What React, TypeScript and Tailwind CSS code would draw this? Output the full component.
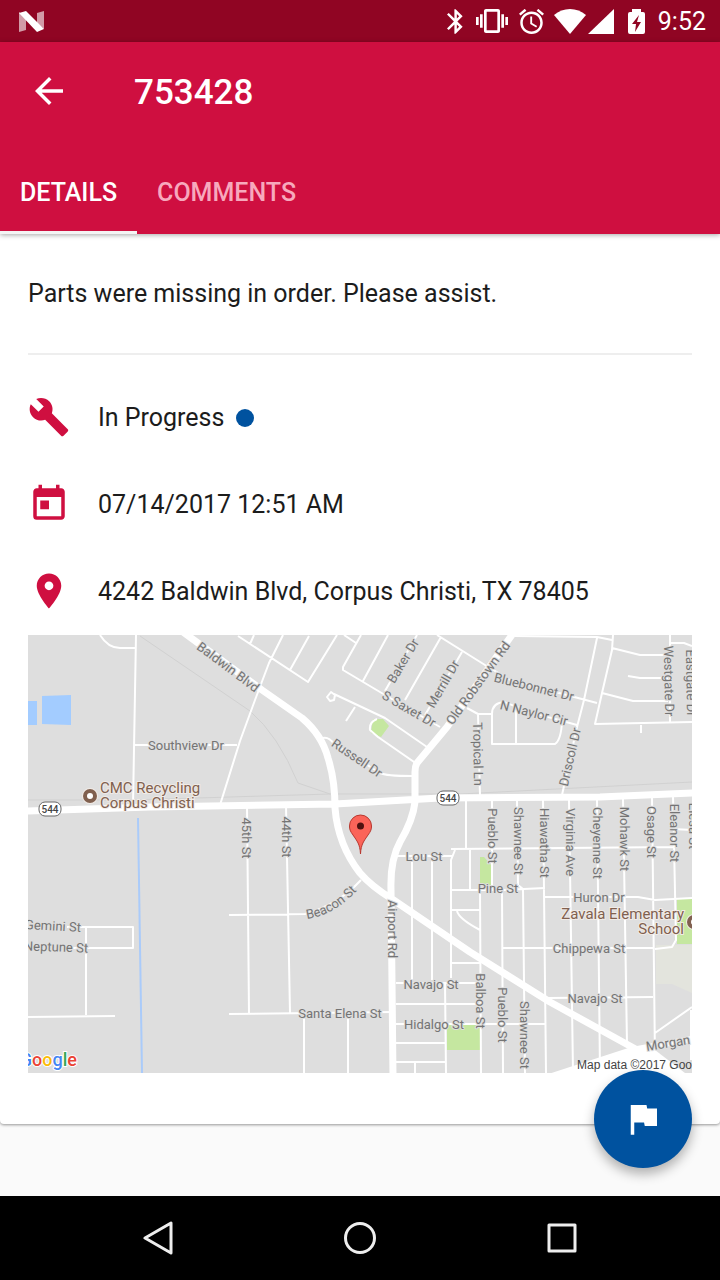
import type { ReactNode } from "react";
import {
  MdAccessAlarm,
  MdArrowBack,
  MdBluetooth,
  MdBuild,
  MdFlag,
  MdPlace,
  MdToday,
  MdVibration,
} from "react-icons/md";

function StatusBar() {
  return (
    <div className="flex h-[42px] items-center justify-between bg-[#900523] pr-[14px] pl-[19px] text-white">
      <svg className="h-[21px] w-[25px]" viewBox="0 0 25 21" aria-hidden="true">
        <path d="M0 1l7 5v13l-7 2z M25 0v18l-7-6V2z" fill="#fff" fillOpacity=".6" />
        <path d="M0 2l7-2 18 18-7 3z" fill="#fff" />
      </svg>
      <div className="flex items-center">
        <MdBluetooth viewBox="5 2 13 20" className="h-[25px] w-4" />
        <MdVibration viewBox="0 3 24 18" className="ml-[13px] h-[24px] w-8" />
        <MdAccessAlarm viewBox="2 2 20 20" className="ml-[11px] h-[25px] w-[25px]" />
        <svg className="ml-[10px] h-[25px] w-[32px]" viewBox="0 0 32 25" aria-hidden="true">
          <path d="M0 6C9-2 23-2 32 6L16 25z" fill="currentColor" />
        </svg>
        <svg className="ml-[2px] h-[25px] w-[26px]" viewBox="0 0 26 25" aria-hidden="true">
          <path d="M26 0v25H0z" fill="currentColor" />
        </svg>
        <svg className="ml-[14px] h-[25px] w-[17px]" viewBox="0 0 17 25" aria-hidden="true">
          <path
            d="M4 0h9v3h2q2 0 2 2v18q0 2-2 2H2q-2 0-2-2V5q0-2 2-2h2zM11 6L4 15h4l-1 8 6-10H9z"
            fill="currentColor"
            fillRule="evenodd"
          />
        </svg>
        <span className="ml-[13px] text-[25px] leading-none">9:52</span>
      </div>
    </div>
  );
}

function Header() {
  return (
    <header className="relative z-10 bg-[#cf0f40] text-white shadow-[0_1px_5px_rgba(0,0,0,0.35)]">
      <div className="flex h-[98px] items-center pl-7">
        <button type="button" aria-label="Back">
          <MdArrowBack className="size-[42px]" />
        </button>
        <h1 className="ml-16 pt-0.5 text-[35px] leading-none font-medium">753428</h1>
      </div>
      <div role="tablist" className="mt-[10px] flex h-[84px] text-[25px] font-medium">
        <button
          type="button"
          role="tab"
          aria-selected="true"
          className="border-b-[3px] border-[#f4f4f4] px-5 pt-1"
        >
          DETAILS
        </button>
        <button
          type="button"
          role="tab"
          aria-selected="false"
          className="border-b-[3px] border-transparent px-5 pt-1 text-[#f7a9bd]"
        >
          COMMENTS
        </button>
      </div>
    </header>
  );
}

const minorRoads = [
  "M100 635Q108 648 120 648H135",
  "M136 635L133 806",
  "M134 745H237",
  "M283 635L269 663L255 700L240 741L220 805",
  "M238 636L308 682L337 635",
  "M250 644L254 635",
  "M309 636L290 670",
  "M361 635L343 667V670L385 695L440 727",
  "M344 635L356 643",
  "M388 635L363 681",
  "M417 635L385 691",
  "M441 637L405 700",
  "M462 652L425 715",
  "M437 635L485 665L510 680L597 703",
  "M331 692l4 3l-1 5l-4 1l-3-4zM334 694L385 718L427 747",
  "M355 707L346 721",
  "M377 719Q369 722 370 730L378 737L417 764",
  "M320 739Q328 735 334 744L380 773Q386 776 412 776",
  "M515 636L597 637L612 640",
  "M597 638L584 700L577 727L562 795",
  "M613 635L612 650L602 693L595 724L692 722",
  "M612 648L640 655H668",
  "M628 676L640 678H668",
  "M602 693L633 701H668",
  "M670 635V723M670 643L684 643L692 646",
  "M641 725V733",
  "M467 708L478 714H491",
  "M577 725L530 712L504 702Q492 703 492 714V744H555Q561 740 562 722",
  "M516 710V744",
  "M478 714L480 796",
  "M466 800V849M451 849L675 847M673 829L692 830",
  "M455 850L451 860V978",
  "M412 858V980M432 858V980",
  "M470 850V890",
  "M492 800V889M517 800L518 885L523 889L525 1073",
  "M480 889L481 1073M502 890L503 1073",
  "M543 800L546 1073M569 800L573 1073M597 799L600 1073",
  "M623 799L627 1045M652 797L655 1060M673 796L676 940L672 947L655 949",
  "M396 856H452M451 890H504L545 888",
  "M451 910H480M457 911Q459 919 480 930M451 963H480",
  "M396 983H481M396 1004H481M396 1024H546M396 1043H445M396 1062H445M415 1062V1073",
  "M445 983L446 1073",
  "M545 897H638L655 900L692 898",
  "M503 948H653M548 998L653 997",
  "M655 1033L692 1007M691 1010V1060",
  "M67 927H133V948H67M86 927V1015M28 1017L115 1016",
  "M247 805L249 1014M286 805L290 1013",
  "M229 915L305 914Q338 905 361 880",
  "M229 1014L393 1012M304 1015V1073M348 1015V1073",
];

const majorRoads = [
  "M183 632L262 690L302 718Q322 735 328 758Q335 780 335 808Q338 845 360 873Q371 886 392 899L470 952L550 1002L650 1057",
  "M514 632L447 727L417 763Q415 766 415 772V802Q413 820 400 842Q390 860 391 890L393 1076",
  "M26 811L150 807L335 804L440 798L600 797L694 793",
];

type Label = [text: string, x: number, y: number, angle?: number];

const streetLabels: Label[] = [
  ["Baldwin Blvd", 228, 667, 37],
  ["Baker Dr", 403, 661, -59],
  ["Merrill Dr", 443, 684, -60],
  ["S Saxet Dr", 409, 709, 30],
  ["Old Robstown Rd", 478, 683, -54],
  ["Bluebonnet Dr", 534, 687, 14],
  ["N Naylor Cir", 534, 713, 14],
  ["Tropical Ln", 478, 754, 89],
  ["Driscoll Dr", 570, 757, -77],
  ["Westgate Dr", 669, 681, 89],
  ["Eastgate Dr", 691, 683, 89],
  ["Russell Dr", 357, 758, 34],
  ["Southview Dr", 186, 745],
  ["45th St", 246, 838, 90],
  ["44th St", 286, 837, 90],
  ["Pueblo St", 492, 836, 90],
  ["Shawnee St", 518, 841, 90],
  ["Hiawatha St", 544, 843, 90],
  ["Virginia Ave", 570, 842, 90],
  ["Cheyenne St", 597, 843, 90],
  ["Mohawk St", 624, 839, 90],
  ["Osage St", 651, 832, 90],
  ["Eleanor St", 674, 833, 90],
  ["Elesa St", 693, 826, 90],
  ["Lou St", 424, 856],
  ["Pine St", 498, 888],
  ["Huron Dr", 599, 897],
  ["Chippewa St", 589, 948],
  ["Navajo St", 431, 984],
  ["Navajo St", 595, 998],
  ["Hidalgo St", 434, 1024],
  ["Santa Elena St", 340, 1013],
  ["Airport Rd", 392, 929, 90],
  ["Balboa St", 480, 1001, 90],
  ["Pueblo St", 502, 1015, 90],
  ["Shawnee St", 524, 1035, 90],
  ["Gemini St", 53, 926, 3],
  ["Neptune St", 56, 947, 2],
  ["Morgan", 668, 1043, -9],
];

function Shield({ x, y }: { x: number; y: number }) {
  return (
    <g>
      <rect x={x - 11} y={y - 7} width="22" height="14" rx="6" fill="#fff" stroke="#666" />
      <text x={x} y={y + 4} textAnchor="middle" fontSize="10" fontWeight="500" fill="#444">
        544
      </text>
    </g>
  );
}

function Map() {
  return (
    <svg
      className="block h-[438px] w-full bg-[#dedede]"
      viewBox="28 635 664 438"
      preserveAspectRatio="xMidYMid slice"
      role="img"
      aria-label="Map of 4242 Baldwin Blvd"
    >
      <path d="M42 696l29-1v30l-29-1zM28 701h9v24h-9z" fill="#a3ccff" />
      <g fill="#c5e7a0">
        <path d="M373 719h10l6 7l-8 11l-10-4z" />
        <path d="M480 857h4l7 8v20h-11z" />
        <path d="M447 1025h34v25h-34z" />
        <path d="M677 898h15v46h-15z" />
      </g>
      <path d="M656 945h36v48l-20-9h-16z" fill="#e3e4dd" />
      <path d="M138 818L142 1073" stroke="#aacbfa" strokeWidth="2" />
      <g fill="none" stroke="#d1d1d1" strokeWidth="1">
        <path d="M140 636L250 711Q278 735 298 783L330 794" />
        <path d="M28 800H130L330 794H460L692 782" />
      </g>
      <path d={minorRoads.join("")} fill="none" stroke="#fff" strokeWidth="2" strokeLinejoin="round" />
      <path d={majorRoads.join("")} fill="none" stroke="#fff" strokeWidth="7" strokeLinejoin="round" />
      <path d="M552 1076L632 1050L692 1039" fill="none" stroke="#fff" strokeWidth="6" />
      <path d="M625 1050h30l30 23h-125z" fill="#fff" />
      <Shield x={50} y={809} />
      <Shield x={448} y={798} />

      <g fill="#747474" stroke="#dedede" strokeWidth="2" paintOrder="stroke" fontSize="13">
        {streetLabels.map(([text, x, y, angle = 0]) => (
          <text
            key={`${text}-${x}`}
            x={x}
            y={y}
            textAnchor="middle"
            dominantBaseline="central"
            transform={`rotate(${angle} ${x} ${y})`}
          >
            {text}
          </text>
        ))}
        <path id="beacon" d="M307 919Q336 915 360 887" fill="none" stroke="none" />
        <text>
          <textPath href="#beacon">Beacon St</textPath>
        </text>
      </g>

      <g fill="#80604f" stroke="#f1ebe6" strokeWidth="2" paintOrder="stroke" fontSize="15">
        <circle cx="90" cy="796" r="7" />
        <circle cx="694" cy="922" r="7" />
        <text x="100" y="793">CMC Recycling</text>
        <text x="100" y="808">Corpus Christi</text>
        <text x="684" y="919" textAnchor="end">Zavala Elementary</text>
        <text x="684" y="934" textAnchor="end">School</text>
      </g>
      <circle cx="90" cy="796" r="3" fill="#fff" />
      <circle cx="694" cy="922" r="3" fill="#fff" />

      <path
        d="M360.500 854C360 844 357 841 353 835C350 831 349.500 829 349.500 826A11 11 0 0 1 371.500 826C371.500 829 371 831 368 835C364 841 361 844 360.500 854z"
        fill="#fb6459"
        stroke="#b7382f"
      />
      <circle cx="360.500" cy="826" r="3.500" fill="#4e1210" />

      <text x="77" y="1066" textAnchor="end" fontSize="18" fontWeight="500" stroke="#fff" strokeWidth="2" paintOrder="stroke">
        <tspan fill="#4285f4">G</tspan>
        <tspan fill="#ea4335">o</tspan>
        <tspan fill="#fbbc05">o</tspan>
        <tspan fill="#4285f4">g</tspan>
        <tspan fill="#34a853">l</tspan>
        <tspan fill="#ea4335">e</tspan>
      </text>
      <text x="692" y="1069" textAnchor="end" fontSize="12" fill="#444" fontFamily="Liberation Sans, sans-serif">
        Map data ©2017 Goo
      </text>
    </svg>
  );
}

function DetailRow({ icon, children }: { icon: ReactNode; children: ReactNode }) {
  return (
    <li className="flex h-[87px] items-center gap-7">
      <span className="pb-0.5 text-[42px] text-[#cf0f40]">{icon}</span>
      <span className="flex items-center gap-3">{children}</span>
    </li>
  );
}

function NavigationBar() {
  return (
    <nav className="flex h-[84px] items-center justify-center bg-black">
      <button type="button" aria-label="Back" className="flex w-[202px] justify-center">
        <svg className="size-[34px]" viewBox="0 0 34 34" fill="none" stroke="#eee" strokeWidth="3" strokeLinejoin="round">
          <path d="M30 2v30L4 17z" />
        </svg>
      </button>
      <button type="button" aria-label="Home" className="flex w-[202px] justify-center">
        <svg className="size-[34px]" viewBox="0 0 34 34" fill="none" stroke="#eee" strokeWidth="3">
          <circle cx="17" cy="17" r="14.500" />
        </svg>
      </button>
      <button type="button" aria-label="Overview" className="flex w-[202px] justify-center">
        <svg className="size-[34px]" viewBox="0 0 34 34" fill="none" stroke="#eee" strokeWidth="3" strokeLinejoin="round">
          <path d="M4 4h26v26H4z" />
        </svg>
      </button>
    </nav>
  );
}

export default function App() {
  return (
    <div className="flex min-h-screen flex-col bg-[#fafafa] font-[Roboto,sans-serif] text-[25px] text-[#1c1c1c]">
      <StatusBar />
      <Header />
      <main className="relative flex-1 pb-[72px]">
        <section className="rounded-b-[4px] bg-white px-7 pb-[51px] shadow-[0_1px_3px_rgba(0,0,0,0.4)]">
          <p className="flex h-[119px] items-center">Parts were missing in order. Please assist.</p>
          <hr className="border-t-2 border-[#eeeeee]" />
          <ul className="pt-[19px]">
            <DetailRow icon={<MdBuild />}>
              In Progress
              <span className="size-[18px] rounded-full bg-[#00529f]" />
            </DetailRow>
            <DetailRow icon={<MdToday />}>07/14/2017 12:51 AM</DetailRow>
            <DetailRow icon={<MdPlace />}>4242 Baldwin Blvd, Corpus Christi, TX 78405</DetailRow>
          </ul>
          <Map />
        </section>
        <button
          type="button"
          aria-label="Flag"
          className="absolute right-7 bottom-7 flex size-[98px] items-center justify-center rounded-full bg-[#00529f] text-white shadow-[0_6px_12px_rgba(0,0,0,0.3)]"
        >
          <MdFlag className="size-[42px]" />
        </button>
      </main>
      <NavigationBar />
    </div>
  );
}
